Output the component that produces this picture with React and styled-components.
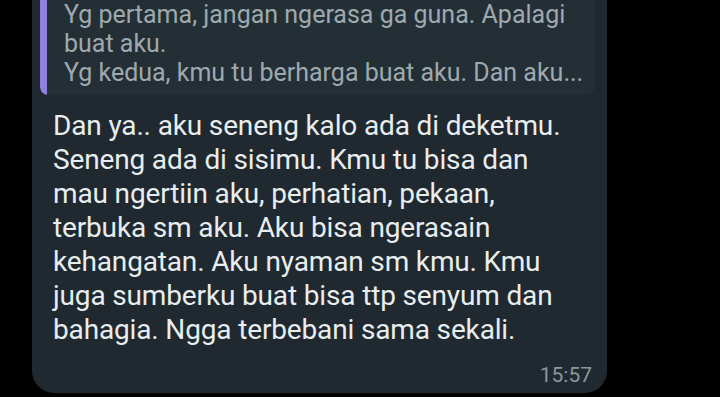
import styled, { createGlobalStyle } from "styled-components";

const GlobalStyle = createGlobalStyle`
    html, body {
        margin: 0;
        padding: 0;
        background: #000;
        overflow: hidden;
    }
    body {
        font-family: Roboto, "Noto Sans", "Liberation Sans", sans-serif;
    }
`;

const Screen = styled.div`
    width: 720px;
    height: 397px;
    background: #000;
    padding-left: 32px;
    box-sizing: border-box;
`;

const Bubble = styled.div`
    width: 575px;
    height: 393px;
    box-sizing: border-box;
    background: #1f292f;
    border-radius: 0 0 22px 22px;
    display: flex;
    flex-direction: column;
    padding: 0 15px 6px 0;
`;

const Quote = styled.div`
    display: flex;
    margin: 0 -3px 0 8px;
    background: #242f35;
    border-radius: 0 0 8px 8px;
    height: 95px;
    overflow: hidden;
`;

const QuoteBar = styled.div`
    width: 7px;
    flex-shrink: 0;
    background: #9181de;
    border-radius: 0 0 0 7px;
`;

const QuoteText = styled.div`
    padding-left: 17px;
    font-size: 25px;
    line-height: 29px;
    color: #9ea9af;
    white-space: nowrap;
`;

const Body = styled.div`
    margin-top: 14px;
    padding-left: 21px;
    font-size: 28px;
    line-height: 34px;
    color: #e8edef;
    letter-spacing: -0.15px;
    white-space: nowrap;
`;

const Meta = styled.div`
    margin-top: auto;
    text-align: right;
    font-size: 21px;
    line-height: 24px;
    color: #8a969c;
`;

export default function App() {
    return (
        <Screen>
            <GlobalStyle />
            <Bubble>
                <Quote>
                    <QuoteBar />
                    <QuoteText>
                        Yg pertama, jangan ngerasa ga guna. Apalagi
                        <br />buat aku.
                        <br />Yg kedua, kmu tu berharga buat aku. Dan aku...
                    </QuoteText>
                </Quote>
                <Body>
                    Dan ya.. aku seneng kalo ada di deketmu.
                    <br />Seneng ada di sisimu. Kmu tu bisa dan
                    <br />mau ngertiin aku, perhatian, pekaan,
                    <br />terbuka sm aku. Aku bisa ngerasain
                    <br />kehangatan. Aku nyaman sm kmu. Kmu
                    <br />juga sumberku buat bisa ttp senyum dan
                    <br />bahagia. Ngga terbebani sama sekali.
                </Body>
                <Meta>15:57</Meta>
            </Bubble>
        </Screen>
    );
}
